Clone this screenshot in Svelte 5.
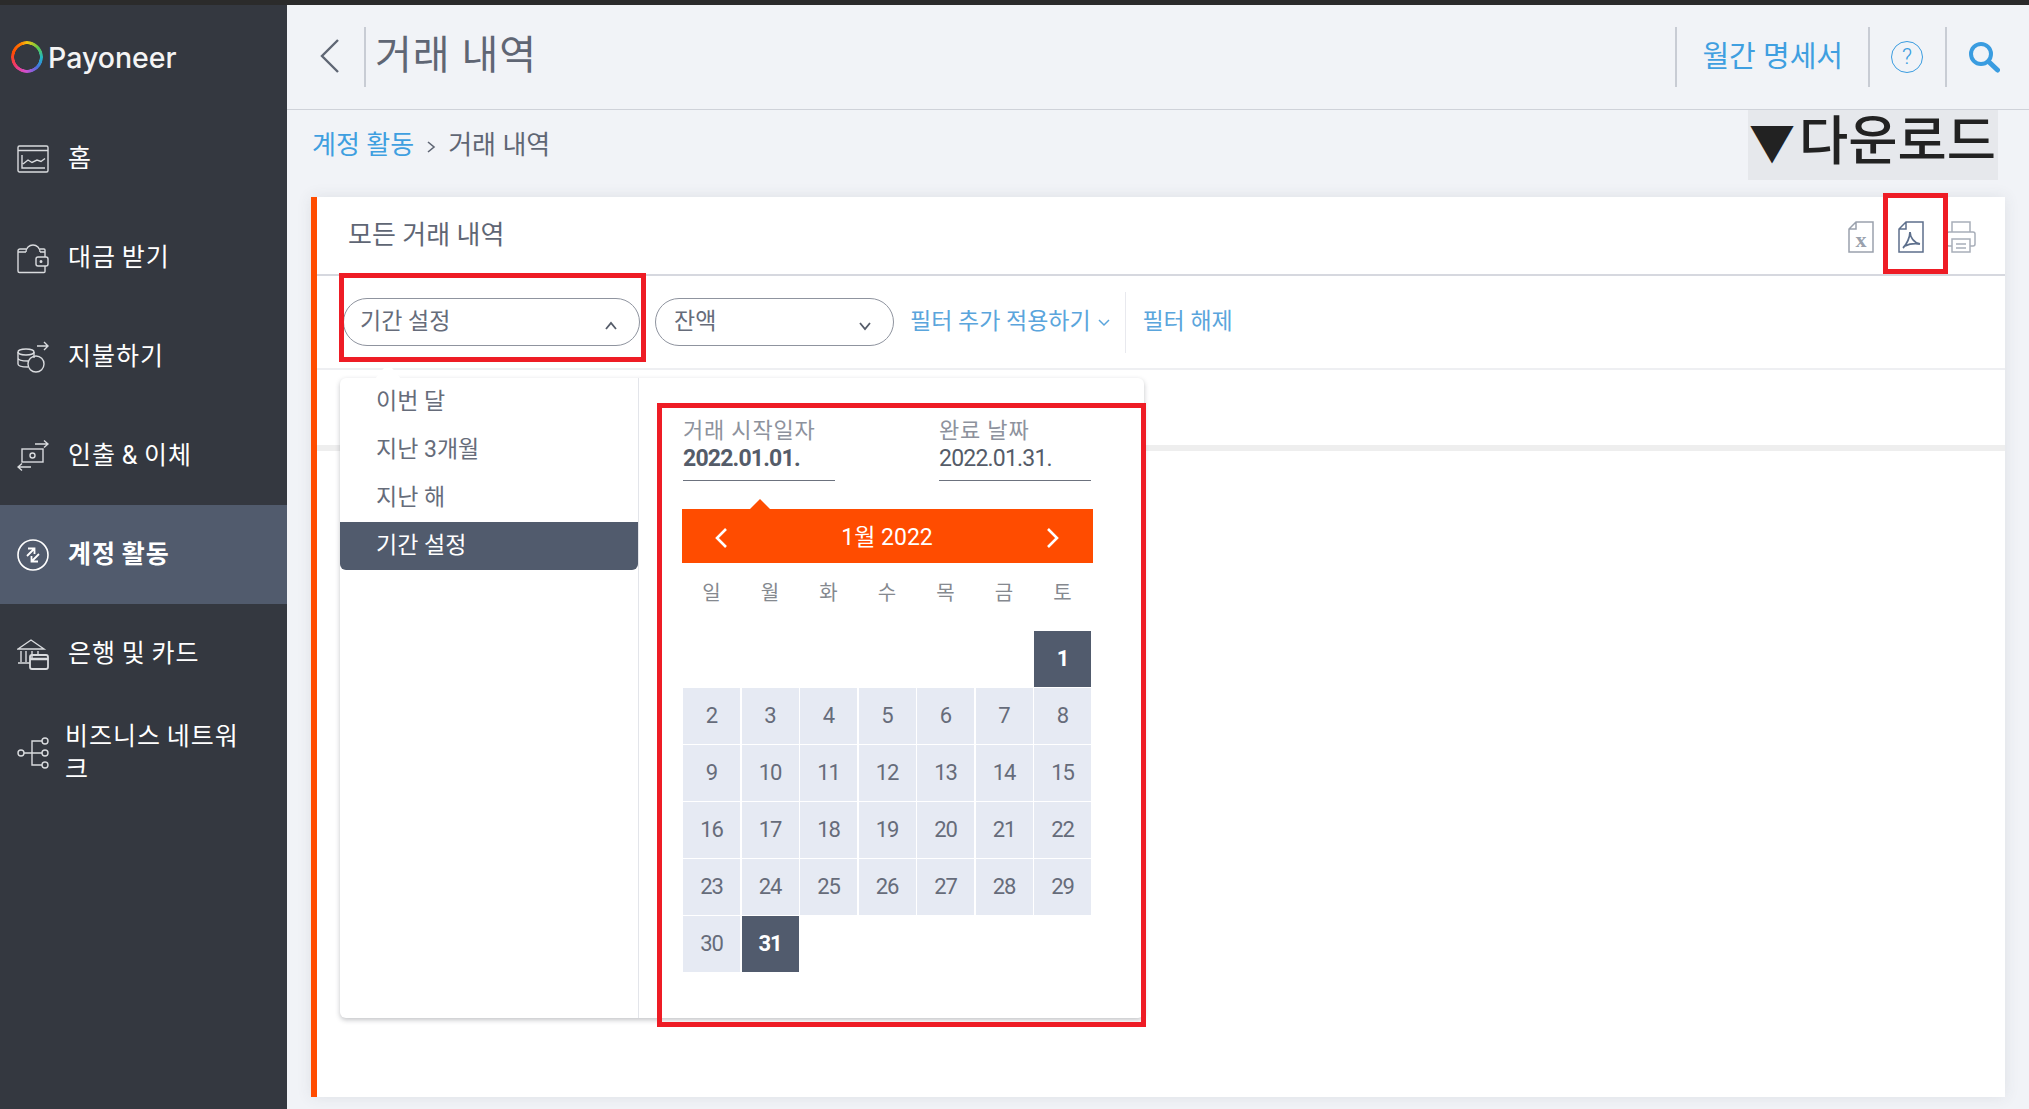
<script>
  const nav = [
    { id: 'home', label: '홈' },
    { id: 'receive', label: '대금 받기' },
    { id: 'pay', label: '지불하기' },
    { id: 'withdraw', label: '인출 & 이체' },
    { id: 'activity', label: '계정 활동', active: true },
    { id: 'bank', label: '은행 및 카드' },
    { id: 'network', label: '비즈니스 네트워크', wrap: true }
  ];
  const periods = ['이번 달', '지난 3개월', '지난 해', '기간 설정'];
  const weekdays = ['일', '월', '화', '수', '목', '금', '토'];
  const days = Array.from({ length: 31 }, (_, i) => i + 1);
</script>

<div class="page">
  <div class="topline"></div>
  <div class="shell">
    <aside class="sidebar">
      <div class="logo">
        <span class="ring"></span>
        <span class="logo-text">Payoneer</span>
      </div>
      <nav>
        {#each nav as item}
          <div class="nav-item" class:active={item.active} class:wrap={item.wrap}>
            <svg class="nav-icon" width="32" height="32" viewBox="0 0 32 32" fill="none" stroke="currentColor" stroke-width="1.4">
              {#if item.id === 'home'}
                <rect x="1" y="3" width="30" height="26" rx="1.5" />
                <path d="M1 7.5h30M5 12v13h23M6 21l5-4 4 2.5 5-2.5 4 1.5 4-3" />
              {:else if item.id === 'receive'}
                <path d="M9 7H3a2 2 0 0 0-2 2v20a1.5 1.5 0 0 0 1.500 1.500H27a1 1 0 0 0 1-1V24M23 7h4a1 1 0 0 1 1 1v7M1 10h8M23 10h5" />
                <path d="M9 10a7 7 0 1 1 14 0" />
                <rect x="19" y="15" width="12" height="9" rx="2" />
                <circle cx="24" cy="19.500" r="0.8" fill="currentColor" />
              {:else if item.id === 'pay'}
                <ellipse cx="9" cy="11" rx="8" ry="3" />
                <path d="M1 11v12c0 1.500 3 3 10 3M1 17c0 1.500 3 3 10 3M17 11v6" />
                <circle cx="19" cy="23" r="8" />
                <path d="M20 5h11M27 1l4 4-4 4" />
              {:else if item.id === 'withdraw'}
                <rect x="5" y="9" width="21" height="13" />
                <circle cx="15.500" cy="15.500" r="2.500" />
                <path d="M18 4h13M27 0.500l4 3.500-4 3.500M14 27H1M5 23.500L1 27l4 3.500" />
              {:else if item.id === 'activity'}
                <circle cx="16" cy="16" r="15" stroke-width="1.600" />
                <path d="M10 17l7-7M11 9.500h6.500V15M22 15l-7 7M21 22.500h-6.500V17" stroke-width="1.800" />
              {:else if item.id === 'bank'}
                <path d="M1 11L14 2l13 9zM4 13v11M9 13v11M15 13v8M21 13v5M1 25h12" />
                <rect x="13" y="17" width="18" height="14" rx="2" stroke-width="1.800" />
                <path d="M13 21h18" stroke-width="2.500" />
              {:else}
                <circle cx="4" cy="16" r="3" />
                <circle cx="28" cy="4" r="3" />
                <circle cx="28" cy="16" r="3" />
                <circle cx="28" cy="28" r="3" />
                <path d="M7 16h18M15 16V4h10M15 16v12h10" />
              {/if}
            </svg>
            <span class="nav-label">{item.label}</span>
          </div>
        {/each}
      </nav>
    </aside>

    <main class="main">
      <header class="header">
        <svg class="back" width="20" height="34" viewBox="0 0 20 34" fill="none" stroke="#5f6674" stroke-width="2.400">
          <path d="M18 1L2 17l16 16" />
        </svg>
        <h1 class="title">거래 내역</h1>
        <div class="spacer"></div>
        <a class="statement">월간 명세서</a>
        <span class="help">?</span>
        <span class="sep"></span>
        <svg class="search" width="32" height="32" viewBox="0 0 32 32" fill="none" stroke="#3a9ce0">
          <circle cx="13" cy="13" r="10" stroke-width="4" />
          <path d="M20.500 20.500L29.500 29" stroke-width="5" stroke-linecap="round" />
        </svg>
      </header>

      <div class="crumbs">
        <a>계정 활동</a>
        <svg width="10" height="14" viewBox="0 0 10 14" fill="none" stroke="#5f6674" stroke-width="1.600"><path d="M2 2l6 5-6 5" /></svg>
        <span>거래 내역</span>
        <div class="spacer"></div>
        <div class="download"><span class="tri">▼</span>다운로드</div>
      </div>

      <section class="card">
        <div class="card-head">
          <span class="card-title">모든 거래 내역</span>
          <div class="tools">
            <svg width="26" height="32" viewBox="0 0 26 32" fill="none" stroke="#9aa1ad" stroke-width="1.500">
              <path d="M8 1h17v30H1V8zM8 1v7H1" />
              <text x="13" y="26" text-anchor="middle" class="x-mark">x</text>
            </svg>
            <svg width="26" height="32" viewBox="0 0 26 32" fill="none" stroke="#5d6f8c" stroke-width="1.500">
              <path d="M8 1h17v30H1V8zM8 1v7H1" />
              <path d="M12 11c0 5-3 12-7 16M12 11c0 5 4 11 10 12M7 25c4-2 9-3 15-2" stroke-width="1.800" />
            </svg>
            <svg width="30" height="32" viewBox="0 0 30 32" fill="none" stroke="#a8aeb9" stroke-width="1.500">
              <path d="M6 11V1h18v10M6 25H3a2 2 0 0 1-2-2V13a2 2 0 0 1 2-2h24a2 2 0 0 1 2 2v10a2 2 0 0 1-2 2h-3" />
              <rect x="6" y="18" width="18" height="13" />
              <path d="M10 23h10M10 27h10" />
            </svg>
          </div>
        </div>

        <div class="filters">
          <div class="pill wide">
            <span>기간 설정</span>
            <svg width="14" height="10" viewBox="0 0 14 10" fill="none" stroke="#555c69" stroke-width="1.800"><path d="M2 8l5-6 5 6" /></svg>
          </div>
          <div class="pill narrow">
            <span>잔액</span>
            <svg width="14" height="10" viewBox="0 0 14 10" fill="none" stroke="#555c69" stroke-width="1.800"><path d="M2 2l5 6 5-6" /></svg>
          </div>
          <a class="more">필터 추가 적용하기
            <svg width="12" height="8" viewBox="0 0 12 8" fill="none" stroke="#5aa5dc" stroke-width="1.500"><path d="M1 1l5 5 5-5" /></svg>
          </a>
          <div class="divider"></div>
          <a class="clear">필터 해제</a>
        </div>
        <div class="band"></div>

        <div class="popup">
          <span class="popup-tip"></span>
          <ul class="periods">
            {#each periods as p, i}
              <li class:selected={i === 3}>{p}</li>
            {/each}
          </ul>
          <div class="picker">
            <div class="range">
              <div class="range-field">
                <label>거래 시작일자</label>
                <b>2022.01.01.</b>
              </div>
              <div class="range-field">
                <label>완료 날짜</label>
                <span>2022.01.31.</span>
              </div>
            </div>
            <div class="month">
              <span class="month-tip"></span>
              <svg width="14" height="22" viewBox="0 0 14 22" fill="none" stroke="#fff" stroke-width="2.600"><path d="M12 2L3 11l9 9" /></svg>
              <span class="month-name">1월 2022</span>
              <svg width="14" height="22" viewBox="0 0 14 22" fill="none" stroke="#fff" stroke-width="2.600"><path d="M2 2l9 9-9 9" /></svg>
            </div>
            <div class="weekdays">
              {#each weekdays as w}<span>{w}</span>{/each}
            </div>
            <div class="days">
              {#each days as d}
                <span class="day" class:picked={d === 1 || d === 31} class:first={d === 1}>{d}</span>
              {/each}
            </div>
          </div>
        </div>

        <!-- red annotation boxes from the screenshot -->
        <div class="mark mark-pdf"></div>
        <div class="mark mark-pill"></div>
        <div class="mark mark-cal"></div>
      </section>
    </main>
  </div>
</div>

<style>
  :global(body) {
    margin: 0;
    background: #f1f3f7;
    font-family: Roboto, "Noto Sans CJK KR", sans-serif;
  }
  .page {
    height: 1109px;
    display: flex;
    flex-direction: column;
    overflow: hidden;
  }
  .topline {
    height: 5px;
    background: #2b2b2b;
    flex-shrink: 0;
  }
  .shell {
    flex: 1;
    display: flex;
    min-height: 0;
  }

  /* Sidebar */
  .sidebar {
    width: 287px;
    flex-shrink: 0;
    background: #343840;
    color: #fff;
  }
  .logo {
    height: 104px;
    display: flex;
    align-items: center;
    padding-left: 11px;
    gap: 5px;
  }
  .ring {
    width: 32px;
    height: 32px;
    border-radius: 50%;
    background: conic-gradient(#f2c40f 0deg, #5fc94a 50deg, #1fb5c9 95deg, #4a6fe0 135deg, #d24fd0 185deg, #f0386b 235deg, #ff4c00 290deg, #ff7a00 335deg, #f2c40f 360deg);
    -webkit-mask: radial-gradient(circle, transparent 12.500px, #000 13px);
    mask: radial-gradient(circle, transparent 12.500px, #000 13px);
  }
  .logo-text {
    font-family: Inter, sans-serif;
    font-size: 28.500px;
    font-weight: 500;
    color: #f4f4f4;
  }
  .nav-item {
    height: 99px;
    display: flex;
    align-items: center;
    padding-left: 17px;
    gap: 19px;
    font-size: 25px;
    letter-spacing: 1px;
    word-spacing: -1.500px;
  }
  .nav-label {
    margin-top: -5px;
  }
  .nav-item.active {
    background: #515b6d;
    font-weight: 700;
  }
  .nav-item.wrap {
    gap: 16px;
  }
  .nav-item.wrap .nav-label {
    width: 185px;
    line-height: 33px;
    margin-top: 0;
  }
  .nav-icon {
    flex-shrink: 0;
    color: #d9dbde;
  }
  .active .nav-icon {
    color: #fff;
  }

  /* Main */
  .main {
    flex: 1;
    min-width: 0;
    display: flex;
    flex-direction: column;
  }
  .header {
    height: 105px;
    flex-shrink: 0;
    box-sizing: border-box;
    border-bottom: 1px solid #cfd2d9;
    display: flex;
    align-items: center;
    padding-left: 33px;
  }
  .back {
    margin-top: -2px;
    margin-right: 24px;
  }
  .title {
    margin: 0;
    height: 60px;
    border-left: 2px solid #c8ccd4;
    padding-left: 9px;
    font-size: 40px;
    line-height: 57px;
    letter-spacing: 1px;
    font-weight: 400;
    color: #5f6674;
  }
  .spacer {
    flex: 1;
  }
  .statement {
    height: 60px;
    line-height: 60px;
    box-sizing: border-box;
    border-left: 2px solid #c8ccd4;
    border-right: 2px solid #c8ccd4;
    padding: 0 25px;
    font-size: 29px;
    color: #3f9fe0;
  }
  .help {
    width: 32px;
    height: 32px;
    box-sizing: border-box;
    border: 1.500px solid #3a9ce0;
    border-radius: 50%;
    margin: 0 22px 0 21px;
    color: #3a9ce0;
    font-size: 22px;
    line-height: 29px;
    text-align: center;
    font-weight: 300;
  }
  .sep {
    width: 2px;
    height: 60px;
    background: #c8ccd4;
    margin-right: 21px;
  }
  .search {
    margin-right: 29px;
  }
  .crumbs {
    height: 87px;
    flex-shrink: 0;
    display: flex;
    align-items: flex-start;
    padding: 0 31px 0 25px;
    gap: 12px;
    font-size: 26px;
    color: #5f6674;
  }
  .crumbs > a, .crumbs > span {
    line-height: 70px;
  }
  .crumbs > svg {
    margin-top: 30px;
  }
  .crumbs a {
    color: #3f9fe0;
  }
  .download {
    height: 70px;
    width: 250px;
    box-sizing: border-box;
    background: #e6e8ec;
    color: #222;
    font-size: 53.500px;
    font-weight: 500;
    line-height: 64px;
    white-space: nowrap;
    padding-left: 1px;
    overflow: hidden;
  }
  .tri {
    font-size: 46px;
    margin-right: 4px;
  }

  /* Card */
  .card {
    position: relative;
    flex: 1;
    margin: 0 24px 12px 24px;
    background: #fff;
    border-left: 6px solid #ff4c00;
    box-shadow: 0 0 14px rgba(60, 66, 80, 0.1);
  }
  .card-head {
    height: 79px;
    box-sizing: border-box;
    border-bottom: 2px solid #d6d8df;
    display: flex;
    align-items: center;
    justify-content: space-between;
    padding: 0 29px 0 31px;
    color: #5f6674;
  }
  .card-title {
    font-size: 26px;
    margin-top: -6px;
  }
  .tools {
    display: flex;
    gap: 24px;
    margin-top: 2px;
  }
  .tools svg:last-child {
    margin-left: -2px;
  }
  .x-mark {
    font-family: "Liberation Serif", serif;
    font-weight: 700;
    font-size: 22px;
    fill: #9aa1ad;
    stroke: none;
  }
  .filters {
    height: 94px;
    box-sizing: border-box;
    border-bottom: 2px solid #eeeff2;
    display: flex;
    align-items: center;
    padding: 0 0 0 26px;
    font-size: 23px;
    color: #666c7a;
  }
  .pill {
    height: 48px;
    box-sizing: border-box;
    border: 1.500px solid #8f949f;
    border-radius: 24px;
    display: flex;
    align-items: center;
    justify-content: space-between;
    padding: 0 21px 0 16px;
  }
  .pill span {
    margin-top: -7px;
  }
  .pill svg {
    margin-top: 8px;
  }
  .pill.wide {
    width: 297px;
  }
  .pill.narrow {
    width: 239px;
    margin-left: 15px;
    margin-right: 16px;
    padding-left: 18px;
  }
  .more, .clear {
    color: #5aa5dc;
    margin-top: -7px;
  }
  .more svg {
    margin-left: 2px;
    vertical-align: 2px;
  }
  .divider {
    width: 1px;
    height: 61px;
    background: #e8e9ee;
    margin: 0 16px 0 15px;
  }
  .band {
    height: 75px;
    border-bottom: 6px solid #eeeeee;
  }

  /* Date popup */
  .popup {
    position: absolute;
    left: 23px;
    top: 181px;
    width: 804px;
    height: 640px;
    box-sizing: border-box;
    display: flex;
    background: #fff;
    border-radius: 6px;
    box-shadow: 0 2px 5px rgba(40, 44, 55, 0.28);
    color: #666c7a;
  }
  .popup-tip {
    position: absolute;
    left: 35px;
    top: -15px;
    width: 0;
    height: 0;
    border-left: 13px solid transparent;
    border-right: 13px solid transparent;
    border-bottom: 16px solid #fff;
  }
  .periods {
    list-style: none;
    margin: 0;
    padding: 0;
    width: 298px;
    flex-shrink: 0;
    border-right: 1px solid #e3e5ea;
    font-size: 23px;
  }
  .periods li {
    height: 48px;
    line-height: 47px;
    padding-left: 36px;
  }
  .periods li.selected {
    background: #515b6d;
    color: #fff;
    border-radius: 0 0 6px 6px;
  }
  .picker {
    padding: 40px 0 0 44px;
    width: 412px;
  }
  .range {
    display: flex;
    gap: 104px;
    font-size: 22px;
  }
  .range-field {
    width: 152px;
    height: 63px;
    box-sizing: border-box;
    border-bottom: 1.500px solid #6c727e;
    display: flex;
    flex-direction: column;
  }
  .range-field label {
    color: #8d929d;
    line-height: 26px;
    white-space: nowrap;
    letter-spacing: 0.8px;
  }
  .range-field b, .range-field span {
    line-height: 30px;
    color: #555c69;
    font-size: 23px;
    letter-spacing: -0.8px;
  }
  .month {
    position: relative;
    width: 411px;
    height: 54px;
    margin: 28px 0 0 -1px;
    box-sizing: border-box;
    background: #ff4c00;
    color: #fff;
    font-size: 23px;
    display: flex;
    align-items: center;
    justify-content: space-between;
    padding: 0 33px 0 32px;
  }
  .month svg {
    margin-top: 4px;
  }
  .month-name {
    margin-top: -3px;
  }
  .month-tip {
    position: absolute;
    left: 68px;
    top: -10px;
    width: 0;
    height: 0;
    border-left: 10px solid transparent;
    border-right: 10px solid transparent;
    border-bottom: 10px solid #ff4c00;
  }
  .weekdays {
    display: grid;
    grid-template-columns: repeat(7, 57px);
    column-gap: 1.500px;
    width: 408px;
    height: 68px;
    line-height: 60px;
    text-align: center;
    font-size: 20px;
    color: #85898f;
  }
  .days {
    display: grid;
    grid-template-columns: repeat(7, 57px);
    grid-auto-rows: 56px;
    gap: 1px 1.500px;
    width: 408px;
  }
  .day {
    background: #e6eaf3;
    display: flex;
    align-items: center;
    justify-content: center;
    font-size: 22px;
    color: #666c7a;
    letter-spacing: -1px;
    padding-bottom: 2px;
    box-sizing: border-box;
  }
  .day.first {
    grid-column: 7;
  }
  .day.picked {
    background: #515b6d;
    color: #fff;
    font-weight: 700;
  }

  /* Annotation boxes */
  .mark {
    position: absolute;
    box-sizing: border-box;
    border: 5px solid #ee1c25;
    pointer-events: none;
  }
  .mark-pdf {
    left: 1566px;
    top: -4px;
    width: 65px;
    height: 81px;
  }
  .mark-pill {
    left: 22px;
    top: 76px;
    width: 307px;
    height: 89px;
  }
  .mark-cal {
    left: 340px;
    top: 206px;
    width: 489px;
    height: 624px;
  }
</style>
